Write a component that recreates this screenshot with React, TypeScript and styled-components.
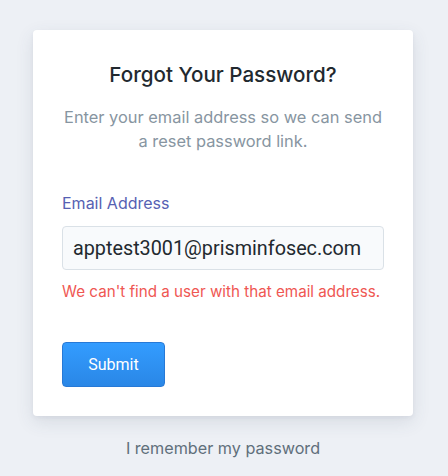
import styled, { createGlobalStyle } from "styled-components";

const GlobalStyle = createGlobalStyle`
  html, body {
    margin: 0;
    padding: 0;
    background: #edf0f5;
  }
  body {
    font-family: Inter, "Noto Sans", sans-serif;
  }
`;

const Page = styled.div`
  display: flex;
  flex-flow: column nowrap;
  align-items: center;
  padding: 30px 2px 0 0;
  min-height: 476px;
  box-sizing: border-box;
`;

const Card = styled.form`
  width: 380px;
  box-sizing: border-box;
  background: #ffffff;
  border-radius: 4px;
  box-shadow: 0 6px 18px rgba(60, 72, 100, 0.12), 0 2px 4px rgba(60, 72, 100, 0.06);
  padding: 33px 29px 29px;
  display: flex;
  flex-flow: column nowrap;
`;

const Title = styled.h1`
  margin: 0;
  text-align: center;
  font-size: 20.6px;
  font-weight: 500;
  line-height: 24px;
  color: #22292f;
`;

const Intro = styled.p`
  margin: 18px 0 0;
  text-align: center;
  font-size: 16.4px;
  line-height: 24px;
  color: #8795a1;
`;

const Label = styled.label`
  margin-top: 40px;
  font-size: 16px;
  line-height: 20px;
  color: #5661b3;
`;

const Input = styled.input<{ $invalid?: boolean }>`
  margin-top: 13px;
  height: 44px;
  box-sizing: border-box;
  width: 100%;
  padding: 0 10px;
  border: 1px solid #dae1e7;
  border-radius: 4px;
  background: #f8fafc;
  font-family: Roboto, "Liberation Sans", sans-serif;
  font-size: 19.8px;
  color: #22292f;
  outline: none;
`;

const ErrorText = styled.p`
  margin: 13px 0 0;
  font-size: 15.2px;
  line-height: 18px;
  color: #ef5753;
`;

const SubmitButton = styled.button`
  margin-top: 41px;
  align-self: flex-start;
  width: 103px;
  height: 45px;
  border: 1px solid #2779d6;
  border-radius: 4px;
  background: linear-gradient(#339cff, #2a87e6);
  color: #ffffff;
  font-family: Roboto, "Liberation Sans", sans-serif;
  font-size: 16px;
  cursor: pointer;
`;

const RememberLink = styled.a`
  margin-top: 22px;
  font-size: 16.2px;
  line-height: 20px;
  color: #606f7b;
  text-decoration: none;
`;

export default function App() {
  return (
    <>
      <GlobalStyle />
      <Page>
        <Card onSubmit={e => e.preventDefault()}>
          <Title>Forgot Your Password?</Title>
          <Intro>
            Enter your email address so we can send
            <br />a reset password link.
          </Intro>
          <Label htmlFor="email">Email Address</Label>
          <Input id="email" type="email" $invalid defaultValue="apptest3001@prisminfosec.com" />
          <ErrorText>We can't find a user with that email address.</ErrorText>
          <SubmitButton type="submit">Submit</SubmitButton>
        </Card>
        <RememberLink href="#">I remember my password</RememberLink>
      </Page>
    </>
  );
}
